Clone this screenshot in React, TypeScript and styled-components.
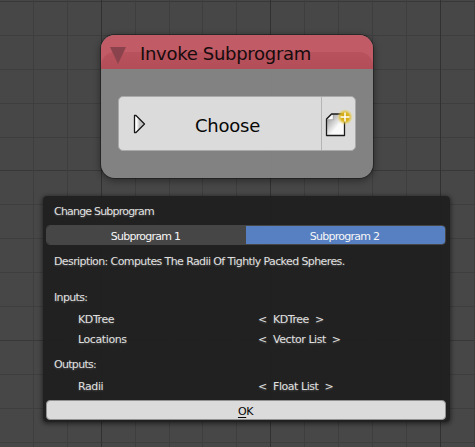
import React from "react";
import styled, { createGlobalStyle } from "styled-components";

const GlobalStyle = createGlobalStyle`
  * { box-sizing: border-box; }
  body { margin: 0; background: #474747; overflow: hidden; }
`;

const Editor = styled.main`
  position: relative;
  isolation: isolate;
  width: 475px;
  height: 447px;
  overflow: hidden;
  background: #474747;
  font-family: "DejaVu Sans", sans-serif;
  padding: 35px 0 0;
  display: flex;
  flex-direction: column;
  align-items: flex-start;
`;

const GridLines = styled.svg`
  position: absolute;
  inset: 0;
  z-index: -1;
`;

const Node = styled.section`
  width: 272px;
  height: 143px;
  margin-left: 101px;
  border-radius: 14px;
  overflow: hidden;
  background: rgba(134, 134, 134, 0.95);
  box-shadow: 0 0 0 1px rgba(20, 20, 20, 0.5), 0 2px 7px 1px rgba(0, 0, 0, 0.38);
`;

const NodeHeader = styled.header`
  position: relative;
  isolation: isolate;
  height: 34px;
  display: flex;
  align-items: center;
  padding-left: 9px;
  background: #c15b66;

  &::before {
    content: "";
    position: absolute;
    inset: 17px 0 0;
    z-index: -1;
    border-radius: 14px 14px 0 0;
    background: linear-gradient(#b8525d, #b34e58);
  }
`;

const CollapseIcon = styled.svg`
  margin-top: 6px;
  margin-right: 14px;
  flex: none;
`;

const Label = styled.span<{ $spacing?: number }>`
  letter-spacing: ${(p) => p.$spacing ?? 0}px;
  white-space: pre;
`;

const NodeTitle = styled.h1`
  margin: 4px 0 0;
  font-size: 18px;
  line-height: 22px;
  font-weight: 400;
  color: #160c0d;
`;

const ButtonGroup = styled.div`
  display: flex;
  width: 238px;
  height: 55px;
  margin: 27px 0 0 17px;
  border: 1px solid #a9a9a9;
  border-radius: 5px;
  background: #dbdbdb;
  overflow: hidden;
`;

const ChooseButton = styled.button`
  width: 203px;
  display: flex;
  align-items: center;
  padding: 4px 0 0 14px;
  border: 0;
  border-right: 1px solid #b4b4b4;
  background: transparent;
  font: 18px/22px "DejaVu Sans", sans-serif;
  color: #080808;

  svg { margin: -4px 48px 0 0; flex: none; }
`;

const NewButton = styled.button`
  flex: 1;
  padding: 1px 0 0;
  border: 0;
  background: transparent;

  svg { display: block; margin: 0 0 0 1px; }
`;

const Popup = styled.section`
  width: 407px;
  height: 226px;
  margin: 18px 0 0 43px;
  padding: 0 4px 0 3px;
  border-radius: 4px;
  background: rgba(32, 32, 32, 0.97);
  box-shadow: 0 1px 4px 1px rgba(0, 0, 0, 0.48);
  font-size: 11px;
  line-height: 14px;
  color: #e0e0e0;
  text-shadow: 0 1px 2px rgba(220, 220, 220, 0.25);
`;

const TextLine = styled.div<{ $height: number; $top: number }>`
  height: ${(p) => p.$height}px;
  padding: ${(p) => p.$top}px 0 0 8px;
`;

const Tabs = styled.div`
  display: flex;
  height: 20px;
  border: 1px solid #454545;
  border-radius: 4px;
  overflow: hidden;
`;

const Tab = styled.button<{ $active?: boolean }>`
  flex: 1;
  padding: 3px 2px 0 0;
  border: 0;
  background: ${(p) => (p.$active ? "#5680c2" : "#464646")};
  color: #f6f6f6;
  font: 11px/14px "DejaVu Sans", sans-serif;
`;

const SocketRow = styled.div<{ $height: number }>`
  display: grid;
  grid-template-columns: 180px 15px auto auto;
  justify-content: start;
  height: ${(p) => p.$height}px;
  padding-left: 32px;
`;

const Closing = styled.span`
  padding-left: 6px;
`;

const OkButton = styled.button`
  display: block;
  width: 400px;
  height: 20px;
  padding: 3px 1px 0 0;
  border: 1px solid #919191;
  border-radius: 4px;
  background: #dbdbdb;
  color: #050505;
  font: 11px/14px "DejaVu Sans", sans-serif;
`;

const Mnemonic = styled.span`
  text-decoration: underline;
  text-underline-offset: 2px;
  text-decoration-thickness: 1px;
`;

const columns = [33, 67, 101, 135, 169, 202, 236, 270, 304, 338, 372, 406, 440, 474];
const rows = [1, 35, 69, 103, 137, 170, 204, 238, 272, 306, 340, 374, 408, 442];
const majorColumns = [101, 270, 440];
const majorRows = [1, 170, 340];

function CanvasGrid() {
  return (
    <GridLines width="475" height="447" shapeRendering="crispEdges">
      {rows.map((y) => (
        <rect key={y} x="0" y={y} width="475" height="1" fill={majorRows.includes(y) ? "#383838" : "#3e3e3e"} />
      ))}
      {columns.map((x) => (
        <rect key={x} x={x} y="0" width="1" height="447" fill={majorColumns.includes(x) ? "#313131" : "#3e3e3e"} />
      ))}
    </GridLines>
  );
}

function NewFileIcon() {
  return (
    <svg width="32" height="34" viewBox="0 0 32 34">
      <defs>
        <radialGradient id="glow">
          <stop offset="0" stopColor="#c99c00" />
          <stop offset="0.55" stopColor="#dcb51c" stopOpacity="0.95" />
          <stop offset="1" stopColor="#f0d450" stopOpacity="0" />
        </radialGradient>
        <linearGradient id="sheet" x1="0" y1="0" x2="1" y2="1">
          <stop offset="0.1" stopColor="#999" />
          <stop offset="0.6" stopColor="#fafafa" />
        </linearGradient>
      </defs>
      <path d="M3.5 28.5V12L8.5 7H21.5V28.5Z" fill="url(#sheet)" stroke="#1c1c1c" strokeWidth="1.3" strokeLinejoin="round" />
      <path d="M4.5 12.5L9 8H10V12.5H4.5Z" fill="#fff" />
      <path d="M10.2 8V12.7H5" fill="none" stroke="#999" strokeWidth="0.6" />
      <circle cx="22" cy="10" r="8" fill="url(#glow)" />
      <path d="M22 5.5V14.5M17.5 10H26.5" stroke="#fff" strokeWidth="1.5" />
    </svg>
  );
}

interface SocketProps {
  name: string;
  type: string;
  height: number;
}

function Socket({ name, type, height }: SocketProps) {
  return (
    <SocketRow $height={height}>
      <Label $spacing={-0.4}>{name}</Label>
      <span>&lt;</span>
      <Label $spacing={-0.45}>{type}</Label>
      <Closing>&gt;</Closing>
    </SocketRow>
  );
}

export default function App() {
  return (
    <Editor>
      <GlobalStyle />
      <CanvasGrid />
      <Node>
        <NodeHeader>
          <CollapseIcon width="16" height="17">
            <path d="M0 0H16L8 17Z" fill="#8a434c" />
          </CollapseIcon>
          <NodeTitle><Label $spacing={-0.3}>Invoke Subprogram</Label></NodeTitle>
        </NodeHeader>
        <ButtonGroup>
          <ChooseButton>
            <svg width="14" height="20">
              <defs>
                <linearGradient id="arrow">
                  <stop offset="0.2" stopColor="#fff" />
                  <stop offset="0.5" stopColor="#c4c4c4" />
                </linearGradient>
              </defs>
              <path d="M1.5 1.5H3L11.5 10L3 18.5H1.5Z" fill="url(#arrow)" stroke="#181818" strokeWidth="1.3" strokeLinejoin="round" />
            </svg>
            <Label $spacing={-0.25}>Choose</Label>
          </ChooseButton>
          <NewButton aria-label="New subprogram"><NewFileIcon /></NewButton>
        </ButtonGroup>
      </Node>
      <Popup>
        <TextLine $height={29} $top={9}><Label $spacing={-0.8}>Change Subprogram</Label></TextLine>
        <Tabs>
          <Tab><Label $spacing={-0.75}>Subprogram 1</Label></Tab>
          <Tab $active><Label $spacing={-0.75}>Subprogram 2</Label></Tab>
        </Tabs>
        <TextLine $height={46} $top={10}>
          <Label $spacing={-0.6}>Desription: Computes The Radii Of Tightly Packed Spheres.</Label>
        </TextLine>
        <TextLine $height={22} $top={0}><Label $spacing={-0.65}>Inputs:</Label></TextLine>
        <Socket name="KDTree" type="KDTree" height={20} />
        <Socket name="Locations" type="Vector List" height={25} />
        <TextLine $height={22} $top={0}><Label $spacing={-0.7}>Outputs:</Label></TextLine>
        <Socket name="Radii" type="Float List" height={20} />
        <OkButton><Label $spacing={-0.4}><Mnemonic>O</Mnemonic>K</Label></OkButton>
      </Popup>
    </Editor>
  );
}
